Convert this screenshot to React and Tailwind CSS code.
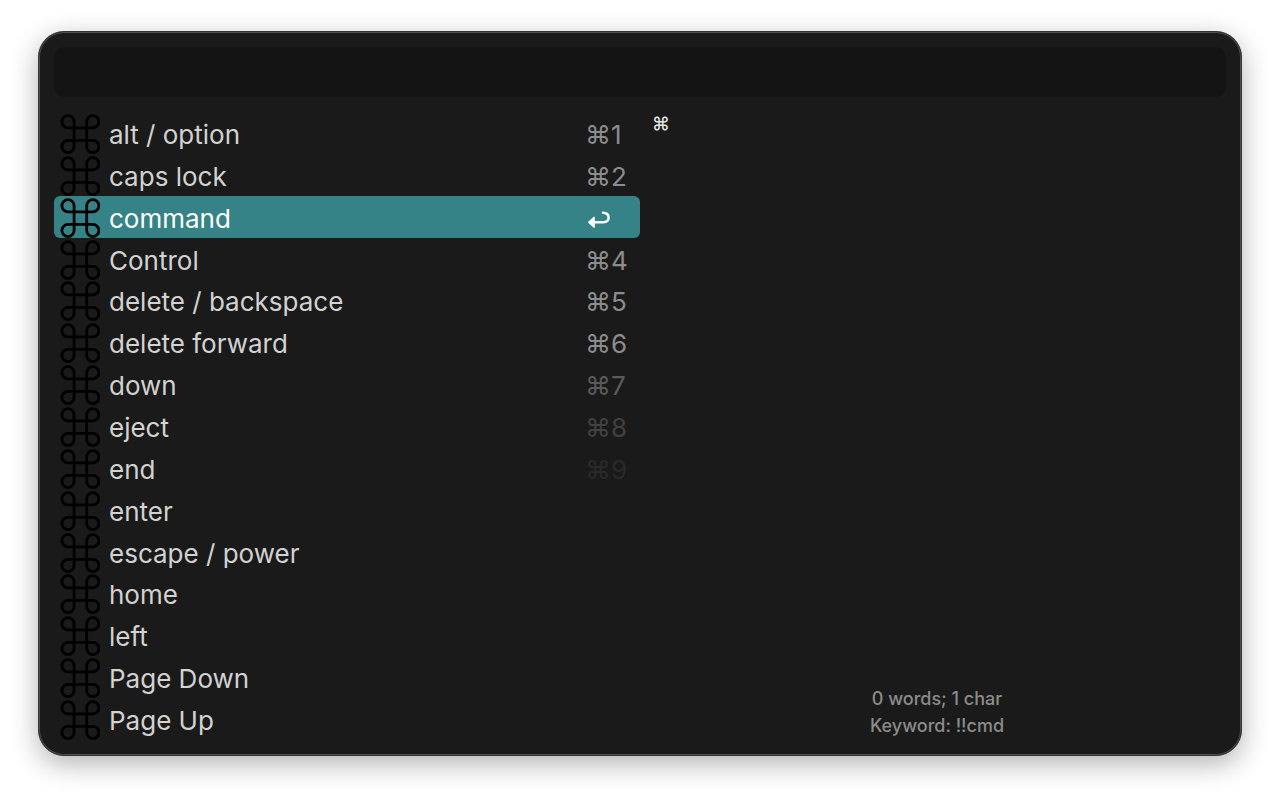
const items = [
  { name: "alt / option", key: "⌘1", tone: "text-[#8c8c8c]" },
  { name: "caps lock", key: "⌘2", tone: "text-[#8c8c8c]" },
  { name: "command", selected: true },
  { name: "Control", key: "⌘4", tone: "text-[#8c8c8c]" },
  { name: "delete / backspace", key: "⌘5", tone: "text-[#8c8c8c]" },
  { name: "delete forward", key: "⌘6", tone: "text-[#8c8c8c]" },
  { name: "down", key: "⌘7", tone: "text-[#5a5a5a]" },
  { name: "eject", key: "⌘8", tone: "text-[#414141]" },
  { name: "end", key: "⌘9", tone: "text-[#292929]" },
  { name: "enter" },
  { name: "escape / power" },
  { name: "home" },
  { name: "left" },
  { name: "Page Down" },
  { name: "Page Up" },
];

function CommandIcon() {
  return (
    <svg
      viewBox="0 0 40 40"
      className="-my-1 size-10 shrink-0"
      fill="none"
      stroke="#000"
      strokeWidth="2.8"
      strokeLinejoin="round"
      aria-hidden="true"
    >
      <path d="M14.1 7.7V32.5A6.1 6.1 0 1 1 8 26.4H32.8A6.1 6.1 0 1 1 26.7 32.5V7.7A6.1 6.1 0 1 1 32.8 13.8H8A6.1 6.1 0 1 1 14.1 7.7Z" />
    </svg>
  );
}

function ReturnIcon() {
  return (
    <svg viewBox="0 0 26 20" className="h-5 w-[26px]" fill="none" aria-hidden="true">
      <path
        d="M8 13.2H18.4C21.6 13.2 23.6 11.4 23.6 8.6C23.6 5.8 21.6 3.8 18 3.7"
        stroke="#fff"
        strokeWidth="2.4"
        strokeLinecap="round"
      />
      <path d="M3.6 13.2L9.2 8.2V18.2Z" fill="#fff" stroke="#fff" strokeWidth="1.2" strokeLinejoin="round" />
    </svg>
  );
}

function Row({ item }) {
  return (
    <li className="flex min-h-10 flex-1">
      <button
        type="button"
        aria-current={item.selected ? "true" : undefined}
        className={
          item.selected
            ? "flex w-full items-center rounded-md bg-[#358287] pt-0.5 pl-1.5 text-left text-white"
            : "flex w-full items-center rounded-md pt-0.5 pl-1.5 text-left text-[#d2d2d2]"
        }
      >
        <CommandIcon />
        <span className="flex-1 pt-0.5 pl-[9px]">{item.name}</span>
        <span className="w-[55px] pt-0.5">
          {item.selected ? <ReturnIcon /> : <span className={item.tone}>{item.key}</span>}
        </span>
      </button>
    </li>
  );
}

export default function App() {
  return (
    <div className="flex min-h-screen bg-white px-[38px] pt-[31px] pb-[45px] font-['Inter','Liberation_Sans',sans-serif]">
      <main className="flex flex-1 flex-col rounded-[26px] border border-[#333333] bg-[#1a1a1a] p-[15px] shadow-[inset_0_0_0_1px_#505050,0_8px_28px_rgba(0,0,0,0.3)]">
        <input
          type="text"
          aria-label="Search snippets"
          className="h-[50px] w-full rounded-xl bg-[#141414] px-4 text-[26px] text-white outline-none"
        />
        <div className="flex flex-1 pt-[15px]">
          <ul className="flex w-1/2 flex-col text-[26px] leading-8">
            {items.map((item) => (
              <Row key={item.name} item={item} />
            ))}
          </ul>
          <section className="flex w-1/2 flex-col justify-between pr-1 pb-px pl-3">
            <p className="text-lg leading-6 font-medium text-[#e6e6e6]">⌘</p>
            <footer className="text-center text-lg leading-[27px] font-medium text-[#8c8c8c]">
              <p>0 words; 1 char</p>
              <p>Keyword: !!cmd</p>
            </footer>
          </section>
        </div>
      </main>
    </div>
  );
}
